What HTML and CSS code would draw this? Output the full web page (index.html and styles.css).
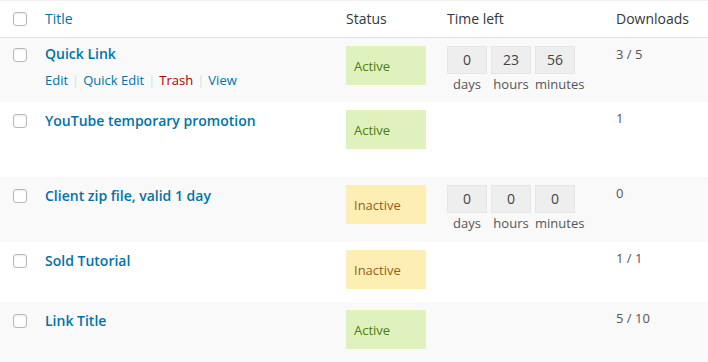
FILE: index.html
```html
<!DOCTYPE html>
<html>
<head>
<meta charset="utf-8">
<link rel="stylesheet" href="styles.css">
</head>
<body>
<div class="list">
  <div class="row head">
    <div class="cell cb"><span class="box"></span></div>
    <div class="cell"><a class="col-link">Title</a></div>
    <div class="cell">Status</div>
    <div class="cell">Time left</div>
    <div class="cell">Downloads</div>
  </div>

  <div class="row alt r1 hover">
    <div class="cell cb"><span class="box"></span></div>
    <div class="cell">
      <a class="title">Quick Link</a>
      <div class="actions"><a>Edit</a><span class="sep">|</span><a>Quick Edit</a><span class="sep">|</span><a class="trash">Trash</a><span class="sep">|</span><a>View</a></div>
    </div>
    <div class="cell"><span class="badge active">Active</span></div>
    <div class="cell">
      <div class="timer">
        <div class="unit"><div class="num">0</div><div class="lbl">days</div></div>
        <div class="unit"><div class="num">23</div><div class="lbl">hours</div></div>
        <div class="unit"><div class="num">56</div><div class="lbl">minutes</div></div>
      </div>
    </div>
    <div class="cell dl">3 / 5</div>
  </div>

  <div class="row r2">
    <div class="cell cb"><span class="box"></span></div>
    <div class="cell"><a class="title">YouTube temporary promotion</a></div>
    <div class="cell"><span class="badge active">Active</span></div>
    <div class="cell"></div>
    <div class="cell dl">1</div>
  </div>

  <div class="row alt r3">
    <div class="cell cb"><span class="box"></span></div>
    <div class="cell"><a class="title">Client zip file, valid 1 day</a></div>
    <div class="cell"><span class="badge inactive">Inactive</span></div>
    <div class="cell">
      <div class="timer">
        <div class="unit"><div class="num">0</div><div class="lbl">days</div></div>
        <div class="unit"><div class="num">0</div><div class="lbl">hours</div></div>
        <div class="unit"><div class="num">0</div><div class="lbl">minutes</div></div>
      </div>
    </div>
    <div class="cell dl">0</div>
  </div>

  <div class="row r4">
    <div class="cell cb"><span class="box"></span></div>
    <div class="cell"><a class="title">Sold Tutorial</a></div>
    <div class="cell"><span class="badge inactive">Inactive</span></div>
    <div class="cell"></div>
    <div class="cell dl">1 / 1</div>
  </div>

  <div class="row alt r5">
    <div class="cell cb"><span class="box"></span></div>
    <div class="cell"><a class="title">Link Title</a></div>
    <div class="cell"><span class="badge active">Active</span></div>
    <div class="cell"></div>
    <div class="cell dl">5 / 10</div>
  </div>
</div>
</body>
</html>
```

FILE: styles.css
```css
* { box-sizing: border-box; }
html, body { margin: 0; padding: 0; background: #fff; }
body {
  font-family: "Open Sans", "Liberation Sans", sans-serif;
  font-size: 13px;
  color: #32373c;
  width: 708px;
  height: 362px;
  overflow: hidden;
}
.list { border-top: 1px solid #f1f1f1; }
.row {
  display: grid;
  grid-template-columns: 35px 301px 101px 169px 102px;
}
.row.alt { background: #f9f9f9; }
.cell { padding: 8px 10px 0; }
.cell.cb { padding: 0 0 0 13px; }
.box {
  display: block;
  width: 14px;
  height: 14px;
  border: 1px solid #b4b9be;
  border-radius: 3px;
  background: #fff;
  box-shadow: inset 0 1px 2px rgba(0,0,0,0.08);
}

.head {
  height: 37px;
  border-bottom: 1px solid #e1e1e1;
  font-size: 14px;
  color: #32373c;
  background: #fff;
}
.head .cell { padding-top: 8px; line-height: 20px; }
.col-link { color: #0073aa; }

.r1 { height: 64px; }
.r2 { height: 75px; }
.r3 { height: 65px; }
.r4 { height: 60px; }
.r5 { height: 61px; }

.row .cell.cb { padding-top: 12px; }
.row.hover .cell.cb { padding-top: 10px; }
.row.head .cell.cb { padding-top: 11px; }

.title {
  display: block;
  font-size: 14px;
  font-weight: 600;
  line-height: 20px;
  color: #0073aa;
  padding-top: 1px;
}
.row.hover .title { margin-top: -2px; padding-top: 0; }
.actions {
  margin-top: 6px;
  line-height: 20px;
  font-size: 13px;
  color: #0073aa;
}
.actions .sep { color: #ddd; margin: 0 4px; }
.actions .trash { color: #a00; }

.badge {
  display: flex;
  align-items: center;
  width: 80px;
  height: 39px;
  padding-left: 8px;
  font-size: 13px;
}
.badge.active { background: #dff1bd; color: #4b7f0e; }
.badge.inactive { background: #fdefb3; color: #9a5b17; }

.timer { display: flex; gap: 4px; }
.unit { width: 40px; }
.num {
  height: 28px;
  background: #eee;
  border: 1px solid #e6e6e6;
  text-align: center;
  line-height: 26px;
  font-size: 14px;
  color: #444;
}
.lbl {
  text-align: center;
  white-space: nowrap;
  font-size: 13px;
  line-height: 20px;
  color: #555;
}
.dl { color: #555; line-height: 20px; padding-top: 6px; }
```
